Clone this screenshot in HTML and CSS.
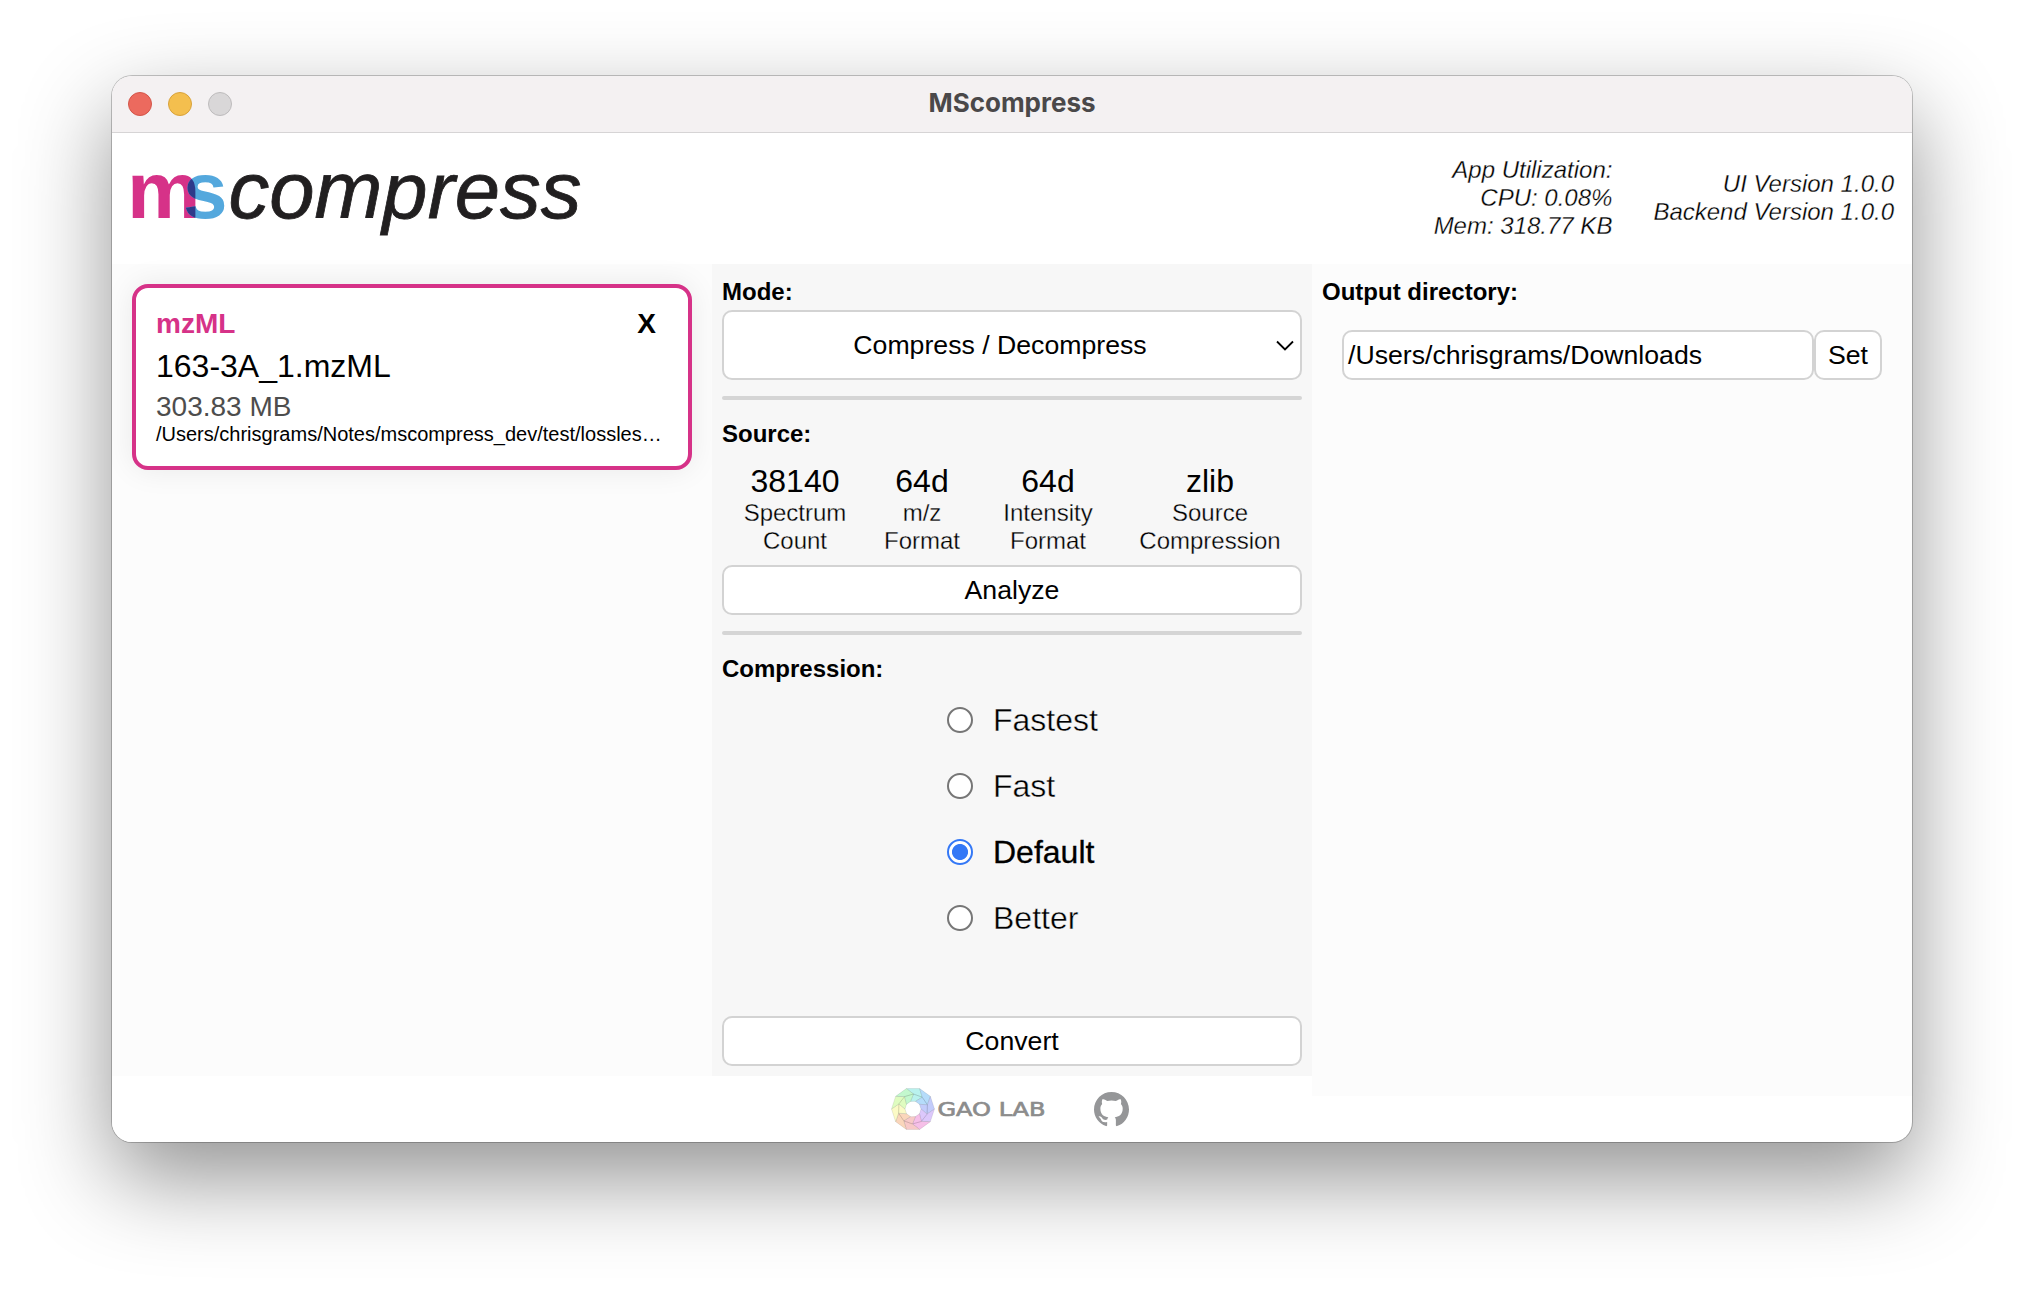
FILE: index.html
```html
<!DOCTYPE html>
<html lang="en">
<head>
<meta charset="utf-8">
<title>MScompress</title>
<link rel="stylesheet" href="styles.css">
</head>
<body>
<div class="window">
  <div class="titlebar">
    <div class="lights"><span class="light close"></span><span class="light minimize"></span><span class="light disabled"></span></div>
    <div class="title">MScompress</div>
    <div></div>
  </div>
  <header class="header">
    <svg class="logo" width="480" height="100" viewBox="0 0 480 100" role="img" aria-label="mscompress">
      <defs><clipPath id="s-shape"><text class="logo-bold" x="61" y="72.5">s</text></clipPath></defs>
      <text class="logo-bold logo-m" x="5" y="72.5" textLength="73.5" lengthAdjust="spacingAndGlyphs">m</text>
      <text class="logo-bold logo-s" x="61" y="72.5">s</text>
      <text class="logo-bold logo-overlap" x="5" y="72.5" textLength="73.5" lengthAdjust="spacingAndGlyphs" clip-path="url(#s-shape)">m</text>
      <text class="logo-light" x="106.5" y="72.5" textLength="353" lengthAdjust="spacingAndGlyphs">compress</text>
    </svg>
    <div class="stats">
      <div>App Utilization:<br>CPU: 0.08%<br>Mem: 318.77 KB</div>
      <div>UI Version 1.0.0<br>Backend Version 1.0.0</div>
    </div>
  </header>
  <main class="columns">
    <section class="column files">
      <div class="card">
        <div class="card-head"><span class="type">mzML</span><span class="remove">X</span></div>
        <div class="name">163-3A_1.mzML</div>
        <div class="size">303.83 MB</div>
        <div class="path">/Users/chrisgrams/Notes/mscompress_dev/test/lossles…</div>
      </div>
    </section>
    <section class="column settings">
      <h2>Mode:</h2>
      <div class="box select"><span>Compress / Decompress</span>
        <svg width="18" height="12" viewBox="0 0 18 12"><path d="M1 1.5l8 8 8-8" fill="none" stroke="#000" stroke-width="1.8"/></svg>
      </div>
      <div class="rule"></div>
      <h2>Source:</h2>
      <div class="facts">
        <div><b>38140</b>Spectrum<br>Count</div>
        <div><b>64d</b>m/z<br>Format</div>
        <div><b>64d</b>Intensity<br>Format</div>
        <div><b>zlib</b>Source<br>Compression</div>
      </div>
      <div class="box button">Analyze</div>
      <div class="rule"></div>
      <h2>Compression:</h2>
      <div class="options">
        <div class="option"><span class="radio"></span>Fastest</div>
        <div class="option"><span class="radio"></span>Fast</div>
        <div class="option selected"><span class="radio"></span>Default</div>
        <div class="option"><span class="radio"></span>Better</div>
      </div>
      <div class="box button convert">Convert</div>
    </section>
    <section class="column output">
      <h2>Output directory:</h2>
      <div class="directory"><div class="box field">/Users/chrisgrams/Downloads</div><div class="box button set">Set</div></div>
    </section>
  </main>
  <footer class="footer">
    <svg class="lab" width="156" height="44" viewBox="0 0 156 44">
      <defs>
        <path id="petal" d="M0-21.5L12.6-17.4 12.4-8.4 5.1-14.1zM5.1-14.1L12.4-8.4 4.7-6.5 0-8z"/>
      </defs>
      <g transform="translate(22 22) rotate(-18)" stroke="#0000001c" stroke-width=".7" stroke-linejoin="round">
        <circle r="14" fill="none" stroke="#dfeaf0" stroke-width="12"/>
        <use href="#petal" fill="#b9f2ee"/>
        <use href="#petal" fill="#b5dcfa" transform="rotate(36)"/>
        <use href="#petal" fill="#c3ccfb" transform="rotate(72)"/>
        <use href="#petal" fill="#dcc8fb" transform="rotate(108)"/>
        <use href="#petal" fill="#f6bfe8" transform="rotate(144)"/>
        <use href="#petal" fill="#f8c9c8" transform="rotate(180)"/>
        <use href="#petal" fill="#fad6bb" transform="rotate(216)"/>
        <use href="#petal" fill="#fbfac6" transform="rotate(252)"/>
        <use href="#petal" fill="#dffcc0" transform="rotate(288)"/>
        <use href="#petal" fill="#c3f8ce" transform="rotate(324)"/>
      </g>
      <text class="lab-name" x="46.5" y="28.5" textLength="108" lengthAdjust="spacingAndGlyphs">GAO LAB</text>
    </svg>
    <svg class="github" width="35" height="35" viewBox="0 0 16 16"><path fill="#959698" d="M8 0C3.58 0 0 3.58 0 8c0 3.54 2.29 6.53 5.47 7.59.4.07.55-.17.55-.38 0-.19-.01-.82-.01-1.49-2.01.37-2.53-.49-2.69-.94-.09-.23-.48-.94-.82-1.13-.28-.15-.68-.52-.01-.53.63-.01 1.08.58 1.23.82.72 1.21 1.87.87 2.33.66.07-.52.28-.87.51-1.07-1.78-.2-3.64-.89-3.64-3.95 0-.87.31-1.59.82-2.15-.08-.2-.36-1.02.08-2.12 0 0 .67-.21 2.2.82.64-.18 1.32-.27 2-.27s1.36.09 2 .27c1.53-1.04 2.2-.82 2.2-.82.44 1.1.16 1.92.08 2.12.51.56.82 1.27.82 2.15 0 3.07-1.87 3.75-3.65 3.95.29.25.54.73.54 1.48 0 1.07-.01 1.93-.01 2.2 0 .21.15.46.55.38A8.01 8.01 0 0 0 16 8c0-4.42-3.58-8-8-8z"/></svg>
  </footer>
</div>
</body>
</html>
```
FILE: styles.css
```css
* { box-sizing: border-box; }
body { margin: 0; padding: 76px 112px 0; height: 1290px; overflow: hidden; background: #fff; color: #000; font: 24px/28px "Liberation Sans", Arial, sans-serif; }
.window { height: 1066px; display: flex; flex-direction: column; background: #fff; border-radius: 20px; box-shadow: 0 0 0 1px rgba(0,0,0,.22), 0 36px 90px rgba(0,0,0,.43); overflow: hidden; }
.titlebar { flex: none; height: 57px; display: grid; grid-template-columns: 1fr auto 1fr; align-items: center; padding: 0 16px; background: #f4f1f2; border-bottom: 1px solid #d6d4d5; }
.lights { display: flex; gap: 16px; }
.light { width: 24px; height: 24px; border-radius: 50%; border: 1px solid; }
.close { background: #ec6a5e; border-color: #d35549; }
.minimize { background: #f4bf4e; border-color: #d8a23b; }
.disabled { background: #d9d7d8; border-color: #bdbbbc; }
.title { padding-bottom: 2px; font: 700 26px/30px Inter, sans-serif; color: #4a4849; }
.header { flex: none; height: 131px; padding: 0 18px 2px 10px; display: flex; justify-content: space-between; align-items: center; }
.logo { margin-top: -6px; }
.logo-bold { font: 700 80px "Liberation Sans", Arial, sans-serif; }
.logo-light { font: italic 400 80px "Liberation Sans", Arial, sans-serif; fill: #211f20; stroke: #211f20; stroke-width: .8px; }
.logo-m { fill: #d63288; }
.logo-s { fill: #54a8dd; }
.logo-overlap { fill: #2e3a8a; }
.stats { display: flex; align-items: center; gap: 41px; text-align: right; font-style: italic; -webkit-text-stroke: .3px #fff; }
.columns { flex: none; height: 812px; display: grid; grid-template-columns: repeat(3, 1fr); }
.column { height: 812px; background: #fcfcfc; }
.files { padding: 20px; }
.card { height: 186px; border: 4px solid #d63288; border-radius: 16px; padding: 18px 20px; background: #fff; box-shadow: 0 0 30px rgba(0,0,0,.08); }
.card-head { display: flex; justify-content: space-between; padding-right: 12px; font: 700 28px/36px "Liberation Sans", sans-serif; }
.type { color: #d63288; }
.name { font-size: 32px; line-height: 49px; }
.size { font-size: 28px; line-height: 32px; color: #4d4d4d; }
.path { font-size: 20px; line-height: 22px; white-space: nowrap; }
.settings { display: flex; flex-direction: column; padding: 10px; background: #f7f7f7; }
h2 { margin: 0; font-size: 24px; line-height: 28px; }
.settings h2 { height: 36px; padding-top: 4px; }
.box { height: 50px; display: flex; align-items: center; justify-content: center; border: 2px solid #d3d3d3; border-radius: 10px; background: #fff; font-size: 26.667px; }
.select { height: 70px; position: relative; padding-right: 24px; }
.select svg { position: absolute; right: 6px; top: 28px; }
.rule { height: 4px; flex: none; margin: 16px 0; border-radius: 2px; background: #d5d5d5; }
.facts { display: grid; grid-template-columns: 146px 108px 144px 180px; height: 113px; padding-top: 11px; text-align: center; -webkit-text-stroke: .3px #f7f7f7; }
.facts b { display: block; font-size: 32px; line-height: 36px; font-weight: 400; -webkit-text-stroke: 0; }
.options { padding-left: 225px; }
.option { height: 66px; display: flex; align-items: center; gap: 20px; font-size: 32px; -webkit-text-stroke: .4px #f7f7f7; }
.option.selected { -webkit-text-stroke: .3px #000; }
.radio { width: 26px; height: 26px; border: 2px solid #767676; border-radius: 50%; background: #fff; }
.selected .radio { border-color: #3478f6; background: radial-gradient(circle, #3478f6 7.6px, #fff 8.4px); }
.convert { margin-top: auto; }
.output { height: 832px; padding: 14px 10px; }
.directory { display: flex; margin: 24px 20px 0; }
.field { width: 472px; justify-content: flex-start; padding-left: 4px; }
.set { flex: 1; }
.footer { flex: none; height: 66px; display: flex; align-items: center; justify-content: center; gap: 47px; padding-right: 4px; background: linear-gradient(90deg, #fff 66.667%, transparent 0); }
.lab-name { font: 400 20px "DejaVu Sans", sans-serif; fill: #8c8c8c; stroke: #8c8c8c; stroke-width: .7px; }
```
